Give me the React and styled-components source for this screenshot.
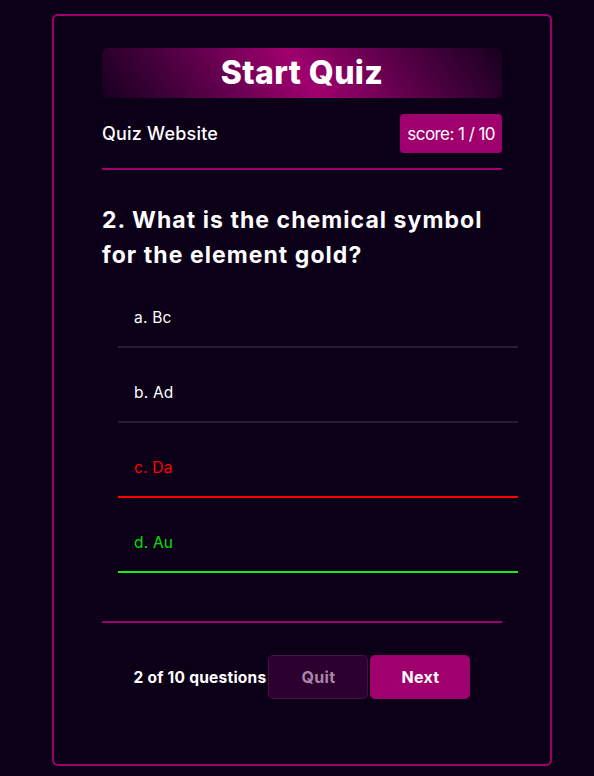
import React from "react";
import styled, { createGlobalStyle } from "styled-components";

const Global = createGlobalStyle`
  html, body {
    margin: 0;
    padding: 0;
    background: #0c0019;
  }
  body {
    font-family: Inter, "Open Sans", "DejaVu Sans", sans-serif;
    color: #ffffff;
  }
`;

const Page = styled.div`
  display: flex;
  align-items: flex-start;
  padding: 14px 0 10px 52px;
  min-height: 776px;
  box-sizing: border-box;
`;

const Card = styled.div`
  width: 500px;
  box-sizing: border-box;
  border: 2px solid #a0006e;
  border-radius: 6px;
  padding: 32px 48px 65px;
  display: flex;
  flex-direction: column;
`;

const Banner = styled.div`
  height: 50px;
  border-radius: 6px;
  background: linear-gradient(
    55deg,
    #16001e 0%,
    #5e004b 28%,
    #a0006e 50%,
    #5e004b 72%,
    #16001e 100%
  );
  display: flex;
  align-items: center;
  justify-content: center;
`;

const Title = styled.h1`
  margin: 0;
  font-size: 32px;
  font-weight: 800;
  letter-spacing: 0.4px;
  line-height: 1;
  color: #ffffff;
`;

const MetaRow = styled.div`
  display: flex;
  align-items: center;
  justify-content: space-between;
  margin-top: 16px;
`;

const SiteName = styled.span`
  font-size: 18px;
  font-weight: 500;
  letter-spacing: 0.2px;
`;

const Score = styled.span`
  height: 39px;
  box-sizing: border-box;
  padding: 0 7px;
  display: flex;
  align-items: center;
  background: #a0006e;
  border-radius: 4px;
  font-size: 17px;
  font-weight: 400;
  letter-spacing: -0.55px;
`;

const Divider = styled.hr`
  margin: ${(p) => p.$top}px 0 0;
  border: none;
  height: 2px;
  background: #a0006e;
`;

const Question = styled.h2`
  margin: 33px 0 0;
  font-size: 23px;
  font-weight: 700;
  line-height: 35px;
  letter-spacing: 1.05px;
`;

const Options = styled.ul`
  list-style: none;
  margin: 0 0 0 16px;
  padding: 0;
  width: 400px;
`;

const Option = styled.li`
  margin-top: 16px;
  padding: 17px 16px;
  font-size: 15.5px;
  line-height: 23px;
  font-weight: 400;
  letter-spacing: 0.2px;
  color: ${(p) => p.$color};
  border-bottom: 2px solid ${(p) => p.$line};
  cursor: pointer;
`;

const Footer = styled.div`
  margin-top: 32px;
  display: flex;
  align-items: center;
  justify-content: center;
  gap: 2px;
`;

const Count = styled.span`
  font-size: 15.5px;
  font-weight: 700;
  letter-spacing: 0.25px;
`;

const Button = styled.button`
  width: 100px;
  height: 44px;
  box-sizing: border-box;
  border-radius: 5px;
  font-family: inherit;
  font-size: 16px;
  font-weight: 700;
  letter-spacing: 0.3px;
  cursor: pointer;
  border: 1px solid ${(p) => (p.$primary ? "#a0006e" : "#481048")};
  background: ${(p) => (p.$primary ? "#a0006e" : "#2c002f")};
  color: ${(p) => (p.$primary ? "#ffffff" : "#ab86a4")};
`;

const options = [
  { label: "a. Bc", color: "#ffffff", line: "#271c33" },
  { label: "b. Ad", color: "#ffffff", line: "#271c33" },
  { label: "c. Da", color: "#ff0000", line: "#ff0000" },
  { label: "d. Au", color: "#00e000", line: "#16ee16" },
];

export default function App() {
  return (
    <>
      <Global />
      <Page>
        <Card>
          <Banner>
            <Title>Start Quiz</Title>
          </Banner>
          <MetaRow>
            <SiteName>Quiz Website</SiteName>
            <Score>score: 1 / 10</Score>
          </MetaRow>
          <Divider $top={15} />
          <Question>
            2. What is the chemical symbol
            <br />
            for the element gold?
          </Question>
          <Options>
            {options.map((o) => (
              <Option key={o.label} $color={o.color} $line={o.line}>
                {o.label}
              </Option>
            ))}
          </Options>
          <Divider $top={48} />
          <Footer>
            <Count>2 of 10 questions</Count>
            <Button>Quit</Button>
            <Button $primary>Next</Button>
          </Footer>
        </Card>
      </Page>
    </>
  );
}
